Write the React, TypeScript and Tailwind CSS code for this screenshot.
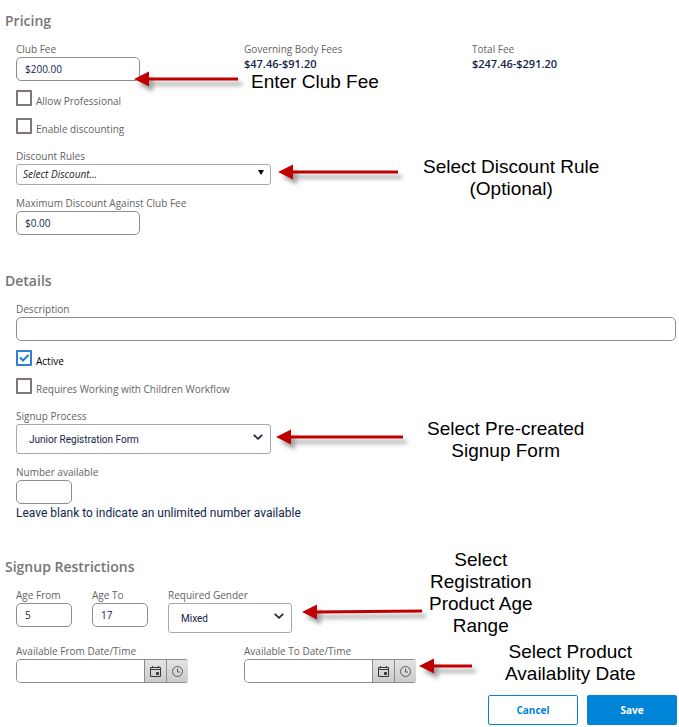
import React from "react";

type FieldProps = {
  id: string;
  label: string;
  className?: string;
  children: React.ReactNode;
};

const inputClass =
  "block h-6 rounded-[5px] border border-[#8c8c8c] bg-white px-2 text-[10px] text-[#14244a] outline-none";

function Field({ id, label, className = "", children }: FieldProps) {
  return (
    <div className={className}>
      <label htmlFor={id} className="block whitespace-nowrap text-[10px] leading-4 text-[#636363]">
        {label}
      </label>
      {children}
    </div>
  );
}

function CheckRow({ id, label, checked = false }: { id: string; label: string; checked?: boolean }) {
  return (
    <div className="flex h-7 items-center gap-1">
      <span className="relative block size-4 shrink-0">
        <input
          id={id}
          type="checkbox"
          defaultChecked={checked}
          className="peer block size-4 appearance-none rounded-[1px] border-2 border-[#7d7676] bg-white checked:border-[#2f80d0]"
        />
        <svg
          viewBox="0 0 16 16"
          className="pointer-events-none absolute inset-0 hidden size-4 peer-checked:block"
          fill="none"
          stroke="#1a7fd4"
          strokeWidth="2"
        >
          <path d="M4 7.5 7 10.5 12.5 5" />
        </svg>
      </span>
      <label
        htmlFor={id}
        className={`pt-1.5 text-[10px] leading-4 ${checked ? "text-[#000000]" : "text-[#636363]"}`}
      >
        {label}
      </label>
    </div>
  );
}

function Select({ id, value, width }: { id: string; value: string; width: string }) {
  return (
    <div className={`relative ${width}`}>
      <select
        id={id}
        defaultValue={value}
        className="block h-[30px] w-full appearance-none rounded-[3px] border border-[#a3a8bd] bg-white px-3 font-[Roboto,sans-serif] text-[10px] text-[#14244a] outline-none"
      >
        <option>{value}</option>
      </select>
      <svg
        viewBox="0 0 10 6"
        className="pointer-events-none absolute right-2 top-[10px] h-[6px] w-[10px]"
        fill="none"
        stroke="#1c2b46"
        strokeWidth="1.8"
      >
        <path d="M.8.8 5 4.8 9.2.8" />
      </svg>
    </div>
  );
}

function DateTime({ id, label }: { id: string; label: string }) {
  const button =
    "flex w-[22px] items-center justify-center border-l border-[#8c8c8c] bg-linear-to-b from-[#e4e4e4] to-[#cbcbcb]";
  return (
    <Field id={id} label={label}>
      <div className="flex h-6 w-[172px] overflow-hidden rounded-l-[5px] rounded-r-[3px] border border-r-0 border-[#8c8c8c]">
        <input id={id} type="text" className="min-w-0 flex-1 bg-white px-2 text-[10px] outline-none" />
        <button type="button" aria-label="Open calendar" className={button}>
          <svg viewBox="0 0 11 11" className="size-[11px]" fill="none" stroke="#3c3436" strokeWidth="1">
            <path d="M.5 1.5h10v9H.5zM0 3.5h11M2.5 0v2M8.5 0v2" />
            <path d="M6.5 6.5h2v2h-2z" fill="#3c3436" />
          </svg>
        </button>
        <button type="button" aria-label="Open time list" className={button}>
          <svg viewBox="0 0 11 11" className="size-[11px]" fill="none" stroke="#5f5a5a" strokeWidth="1">
            <circle cx="5.5" cy="5.5" r="5" />
            <path d="M5.5 2.5v3.5h2.5" />
          </svg>
        </button>
      </div>
    </Field>
  );
}

function Heading({ children }: { children: React.ReactNode }) {
  return <h2 className="mb-[10px] pl-[5px] text-[14px] font-semibold leading-5 text-[#757575]">{children}</h2>;
}

function Total({ label, value }: { label: string; value: string }) {
  return (
    <dl>
      <dt className="text-[10px] leading-4 text-[#636363]">{label}</dt>
      <dd className="text-[11px] font-semibold leading-[14px] text-[#14244a]">{value}</dd>
    </dl>
  );
}

function Arrow({ length, slope = 0, className }: { length: number; slope?: number; className: string }) {
  return (
    <svg
      aria-hidden="true"
      width={length + 12}
      height="30"
      className={`pointer-events-none absolute overflow-visible ${className}`}
    >
      <g fill="#c00000" className="drop-shadow-[4px_5px_2px_rgba(0,0,0,0.38)]">
        <path d="M0 8 15 .5v15z" />
        <path d={`M13 6.5 ${length} ${6.5 - slope}v3L13 9.5z`} />
      </g>
    </svg>
  );
}

function Note({ className, children }: { className: string; children: React.ReactNode }) {
  return (
    <p
      className={`pointer-events-none absolute whitespace-nowrap text-center font-['Liberation_Sans',Arial,sans-serif] text-[19px] leading-[22px] text-black ${className}`}
    >
      {children}
    </p>
  );
}

export default function App() {
  return (
    <main className="relative bg-white pb-[2px] pt-[11px] font-['Open_Sans',sans-serif]">
      <form onSubmit={(e) => e.preventDefault()}>
        <section>
          <Heading>Pricing</Heading>
          <div className="pl-4 pr-[3px]">
            <div className="grid grid-cols-3 gap-6">
              <Field id="club-fee" label="Club Fee">
                <input id="club-fee" defaultValue="$200.00" className={`${inputClass} w-[124px]`} />
              </Field>
              <Total label="Governing Body Fees" value="$47.46-$91.20" />
              <Total label="Total Fee" value="$247.46-$291.20" />
            </div>
            <div className="mb-2 mt-[3px]">
              <CheckRow id="allow-pro" label="Allow Professional" />
              <CheckRow id="discounting" label="Enable discounting" />
            </div>
            <Field id="rules" label="Discount Rules" className="mb-[10px]">
              <div className="relative w-[255px]">
                <select
                  id="rules"
                  className="block h-[21px] w-full appearance-none rounded-[3px] border border-[#a3a8bd] bg-white px-[6px] text-[10px] italic text-[#222222] outline-none"
                >
                  <option>Select Discount...</option>
                </select>
                <svg
                  viewBox="0 0 6 5"
                  className="pointer-events-none absolute right-[7px] top-[6px] h-[5px] w-[6px]"
                  fill="#000000"
                >
                  <path d="M0 0h6L3 5z" />
                </svg>
              </div>
            </Field>
            <Field id="max-discount" label="Maximum Discount Against Club Fee">
              <input id="max-discount" defaultValue="$0.00" className={`${inputClass} w-[124px]`} />
            </Field>
          </div>
        </section>

        <section className="mt-9">
          <Heading>Details</Heading>
          <div className="pl-4 pr-[3px]">
            <Field id="description" label="Description">
              <input id="description" className={`${inputClass} w-full`} />
            </Field>
            <div className="mb-2 mt-[3px]">
              <CheckRow id="active" label="Active" checked />
              <CheckRow id="wwc" label="Requires Working with Children Workflow" />
            </div>
            <Field id="process" label="Signup Process" className="mb-[10px]">
              <Select id="process" value="Junior Registration Form" width="w-[255px]" />
            </Field>
            <Field id="number" label="Number available">
              <input id="number" className={`${inputClass} w-14`} />
            </Field>
            <p className="mt-px font-[Roboto,sans-serif] text-[12px] leading-4 text-[#14244a]">
              Leave blank to indicate an unlimited number available
            </p>
          </div>
        </section>

        <section className="mt-9">
          <Heading>Signup Restrictions</Heading>
          <div className="pl-4 pr-[3px]">
            <div className="mb-[10px] flex gap-5">
              <Field id="age-from" label="Age From" className="w-14">
                <input id="age-from" defaultValue="5" className={`${inputClass} w-full`} />
              </Field>
              <Field id="age-to" label="Age To" className="w-14">
                <input id="age-to" defaultValue="17" className={`${inputClass} w-full`} />
              </Field>
              <Field id="gender" label="Required Gender">
                <Select id="gender" value="Mixed" width="w-[124px]" />
              </Field>
            </div>
            <div className="grid grid-cols-3 gap-6">
              <DateTime id="from" label="Available From Date/Time" />
              <DateTime id="to" label="Available To Date/Time" />
            </div>
          </div>
        </section>

        <div className="mt-3 flex justify-end gap-[9px] pr-[2px] text-[10px] font-bold">
          <button
            type="button"
            className="h-[30px] w-[90px] rounded-[2px] border border-[#0084d8] bg-white text-[#0084d8]"
          >
            Cancel
          </button>
          <button type="submit" className="h-[30px] w-[90px] rounded-[2px] bg-[#0084d8] text-white">
            Save
          </button>
        </div>
      </form>

      <Arrow length={104} className="left-[134px] top-[71px]" />
      <Note className="left-[251px] top-[71px]">Enter Club Fee</Note>

      <Arrow length={120} className="left-[278px] top-[164px]" />
      <Note className="left-[423px] top-[156px]">
        Select Discount Rule
        <br />
        (Optional)
      </Note>

      <Arrow length={127} className="left-[276px] top-[429px]" />
      <Note className="left-[427px] top-[418px]">
        Select Pre-created
        <br />
        Signup Form
      </Note>

      <Arrow length={120} slope={1} className="left-[302px] top-[604px]" />
      <Note className="left-[429px] top-[549px]">
        Select
        <br />
        Registration
        <br />
        Product Age
        <br />
        Range
      </Note>

      <Arrow length={53} className="left-[419px] top-[658px]" />
      <Note className="left-[505px] top-[641px]">
        Select Product
        <br />
        Availablity Date
      </Note>
    </main>
  );
}
